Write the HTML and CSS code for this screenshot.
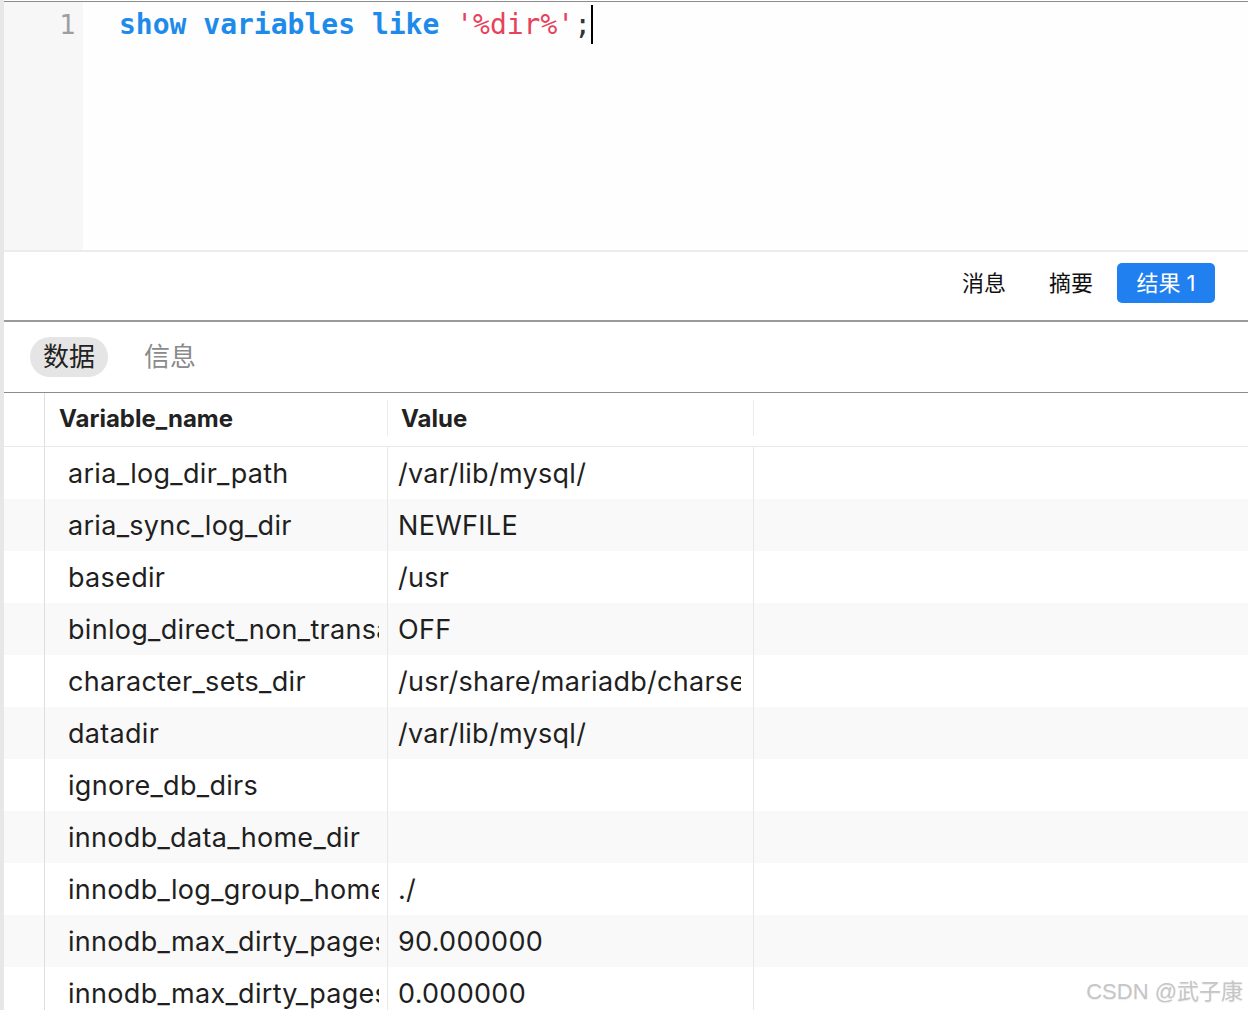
FILE: index.html
```html
<!DOCTYPE html>
<html lang="zh-CN">
<head>
<meta charset="utf-8">
<title>show variables</title>
<link rel="stylesheet" href="styles.css">
</head>
<body>
<div class="app">
  <div class="editor">
    <div class="gutter"><span class="ln">1</span></div>
    <div class="code"><span class="kw">show</span> <span class="kw">variables</span> <span class="kw">like</span> <span class="str">'%dir%'</span><span class="punc">;</span><span class="cursor"></span></div>
  </div>
  <div class="toolbar">
    <span class="rtab">消息</span>
    <span class="rtab">摘要</span>
    <span class="rtab active">结果 1</span>
  </div>
  <div class="subtabs">
    <span class="stab active">数据</span>
    <span class="stab">信息</span>
  </div>
  <div class="grid">
    <div class="row head"><div class="rn"></div><div class="c1"><span class="t">Variable_name</span></div><div class="c2"><span class="t">Value</span></div><div class="c3"></div></div>
    <div class="row"><div class="rn"></div><div class="c1"><span class="t">aria_log_dir_path</span></div><div class="c2"><span class="t">/var/lib/mysql/</span></div><div class="c3"></div></div>
    <div class="row alt"><div class="rn"></div><div class="c1"><span class="t">aria_sync_log_dir</span></div><div class="c2"><span class="t">NEWFILE</span></div><div class="c3"></div></div>
    <div class="row"><div class="rn"></div><div class="c1"><span class="t">basedir</span></div><div class="c2"><span class="t">/usr</span></div><div class="c3"></div></div>
    <div class="row alt"><div class="rn"></div><div class="c1"><span class="t">binlog_direct_non_transactional_updates</span></div><div class="c2"><span class="t">OFF</span></div><div class="c3"></div></div>
    <div class="row"><div class="rn"></div><div class="c1"><span class="t">character_sets_dir</span></div><div class="c2"><span class="t">/usr/share/mariadb/charsets/</span></div><div class="c3"></div></div>
    <div class="row alt"><div class="rn"></div><div class="c1"><span class="t">datadir</span></div><div class="c2"><span class="t">/var/lib/mysql/</span></div><div class="c3"></div></div>
    <div class="row"><div class="rn"></div><div class="c1"><span class="t">ignore_db_dirs</span></div><div class="c2"></div><div class="c3"></div></div>
    <div class="row alt"><div class="rn"></div><div class="c1"><span class="t">innodb_data_home_dir</span></div><div class="c2"></div><div class="c3"></div></div>
    <div class="row"><div class="rn"></div><div class="c1"><span class="t">innodb_log_group_home_dir</span></div><div class="c2"><span class="t">./</span></div><div class="c3"></div></div>
    <div class="row alt"><div class="rn"></div><div class="c1"><span class="t">innodb_max_dirty_pages_pct</span></div><div class="c2"><span class="t">90.000000</span></div><div class="c3"></div></div>
    <div class="row"><div class="rn"></div><div class="c1"><span class="t">innodb_max_dirty_pages_pct_lwm</span></div><div class="c2"><span class="t">0.000000</span></div><div class="c3"></div></div>
  </div>
  <div class="watermark">CSDN @武子康</div>
</div>
</body>
</html>
```

FILE: styles.css
```css
html, body {
  margin: 0;
  padding: 0;
  background: #ffffff;
}

body {
  font-family: Inter, "Noto Sans CJK SC", sans-serif;
  color: #1f1f1f;
}

.app {
  position: relative;
  height: 1010px;
  overflow: hidden;
  border-left: 4px solid #e7e7e7;
}

/* editor */
.editor {
  display: flex;
  height: 248px;
  margin-top: 1px;
  border-top: 1px solid #8c8c8c;
  border-bottom: 2px solid #ececec;
  background: #fefefe;
}

.gutter {
  width: 79px;
  flex: none;
  background: #f7f7f7;
  box-sizing: border-box;
  padding-top: 3px;
  padding-right: 7px;
  text-align: right;
}

.ln {
  font-family: "DejaVu Sans", sans-serif;
  font-size: 26px;
  line-height: 40px;
  color: #9e9e9e;
}

.code {
  padding-left: 36px;
  padding-top: 3px;
  font-family: "DejaVu Sans Mono", monospace;
  font-size: 28px;
  line-height: 40px;
  white-space: pre;
}

.kw {
  color: #1e8beb;
  font-weight: bold;
}

.str {
  color: #e6425c;
}

.punc {
  color: #333333;
}

.cursor {
  display: inline-block;
  width: 2px;
  height: 39px;
  background: #000000;
  vertical-align: top;
}

/* result toolbar */
.toolbar {
  display: flex;
  justify-content: flex-end;
  align-items: center;
  gap: 5px;
  height: 70px;
  box-sizing: border-box;
  padding-right: 33px;
  padding-bottom: 6px;
  border-bottom: 2px solid #9a9a9a;
}

.rtab {
  font-size: 22px;
  height: 40px;
  line-height: 40px;
  padding: 0 19px;
  color: #111111;
}

.rtab.active {
  width: 98px;
  padding: 0;
  text-align: center;
  background: #2180f0;
  color: #ffffff;
  border-radius: 5px;
}

/* sub tabs */
.subtabs {
  display: flex;
  align-items: center;
  gap: 23px;
  height: 70px;
  padding-left: 26px;
  border-bottom: 1px solid #8c8c8c;
}

.stab {
  font-size: 26px;
  height: 40px;
  line-height: 40px;
  padding: 0 13px;
  border-radius: 20px;
  color: #8a8a8a;
}

.stab.active {
  background: #e5e5e5;
  color: #222222;
}

/* data grid */
.row {
  display: flex;
  height: 52px;
  font-size: 27px;
  letter-spacing: 0.3px;
}

.row.alt {
  background: #f9f9f9;
}

.rn {
  width: 40px;
  flex: none;
  border-right: 1px solid #dedede;
}

.c1, .c2 {
  flex: none;
  box-sizing: border-box;
  padding-top: 2px;
  line-height: 50px;
  border-right: 1px solid #e8e8e8;
}

.t {
  display: block;
  white-space: nowrap;
  overflow: hidden;
}

.c1 {
  width: 343px;
  padding-left: 23px;
  padding-right: 8px;
}

.c2 {
  width: 366px;
  padding-left: 10px;
  padding-right: 12px;
}

.c3 {
  flex: 1;
}

.row.head {
  height: 53px;
  border-bottom: 1px solid #e9e9e9;
  font-size: 24px;
  letter-spacing: 0;
  font-weight: 700;
  color: #222222;
}

.row.head .c1,
.row.head .c2 {
  height: 36px;
  padding-top: 2px;
  line-height: 34px;
  margin-top: 7px;
  border-right-color: #ececec;
}

.row.head .c1 {
  padding-left: 14px;
}

.row.head .c2 {
  padding-left: 13px;
}

.watermark {
  position: absolute;
  right: 5px;
  bottom: 5px;
  font-family: "Liberation Sans", "Noto Sans CJK SC", sans-serif;
  font-size: 22px;
  color: #c6c6c6;
  text-shadow: 0 1px 1px rgba(0, 0, 0, 0.08);
}
```
